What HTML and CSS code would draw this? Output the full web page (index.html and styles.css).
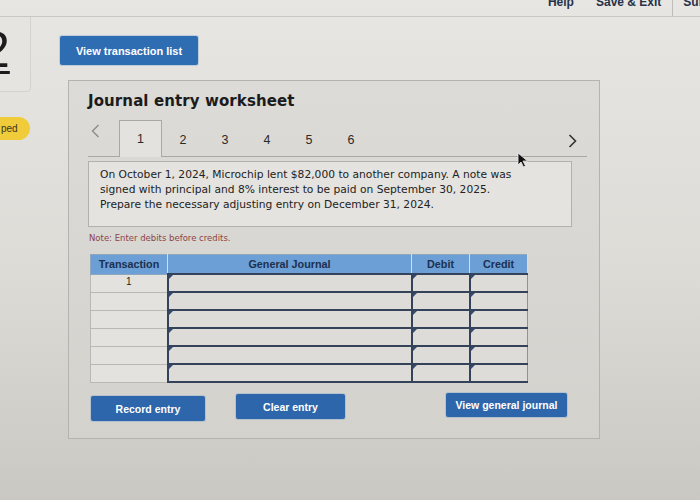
FILE: index.html
```html
<!DOCTYPE html>
<html>
<head>
<meta charset="utf-8">
<link rel="stylesheet" href="styles.css">
</head>
<body>
<header class="topbar">
  <span class="tb-item tb-help">Help</span>
  <span class="tb-item">Save &amp; Exit</span>
  <span class="tb-sep"></span>
  <span class="tb-item">Sub</span>
</header>
<div class="layout">
  <aside class="side">
    <div class="qcard"><span class="qnum">2</span></div>
    <div class="pill">ped</div>
  </aside>
  <main class="main">
    <button class="btn btn-list">View transaction list</button>
    <section class="panel">
      <h1 class="title">Journal entry worksheet</h1>
      <div class="tabs">
        <span class="nav nav-prev"><svg width="9" height="14" viewBox="0 0 9 14"><path d="M7.5 1 L1.5 7 L7.5 13" fill="none" stroke="#8a8a8a" stroke-width="1.3"/></svg></span>
        <span class="tab tab-active">1</span>
        <span class="tab">2</span>
        <span class="tab">3</span>
        <span class="tab">4</span>
        <span class="tab">5</span>
        <span class="tab">6</span>
        <span class="nav nav-next"><svg width="9" height="14" viewBox="0 0 9 14"><path d="M1.5 1 L7.5 7 L1.5 13" fill="none" stroke="#333" stroke-width="1.6"/></svg></span>
      </div>
      <div class="question">
        On October 1, 2024, Microchip lent $82,000 to another company. A note was signed with principal and 8% interest to be paid on September 30, 2025. Prepare the necessary adjusting entry on December 31, 2024.
      </div>
      <p class="note">Note: Enter debits before credits.</p>
      <table class="journal">
        <thead>
          <tr>
            <th class="c-tx">Transaction</th>
            <th class="c-gj">General Journal</th>
            <th class="c-dr">Debit</th>
            <th class="c-cr">Credit</th>
          </tr>
        </thead>
        <tbody>
          <tr><td class="tx">1</td><td class="in"></td><td class="in"></td><td class="in"></td></tr>
          <tr><td class="tx"></td><td class="in"></td><td class="in"></td><td class="in"></td></tr>
          <tr><td class="tx"></td><td class="in"></td><td class="in"></td><td class="in"></td></tr>
          <tr><td class="tx"></td><td class="in"></td><td class="in"></td><td class="in"></td></tr>
          <tr><td class="tx"></td><td class="in"></td><td class="in"></td><td class="in"></td></tr>
          <tr><td class="tx"></td><td class="in"></td><td class="in"></td><td class="in"></td></tr>
        </tbody>
      </table>
      <div class="actions">
        <button class="btn btn-record">Record entry</button>
        <button class="btn btn-clear">Clear entry</button>
        <button class="btn btn-view">View general journal</button>
      </div>
    </section>
  </main>
</div>
<svg class="cursor" width="12" height="16" viewBox="0 0 12 16"><path d="M1 1 L1 13 L4 10 L6.5 15 L8.5 14 L6 9 L10.5 9 Z" fill="#111" stroke="#eee" stroke-width="0.8"/></svg>
</body>
</html>
```
FILE: styles.css
```css
html, body {
  margin: 0;
  padding: 0;
}
body {
  width: 700px;
  height: 500px;
  overflow: hidden;
  position: relative;
  background: linear-gradient(to bottom, #e7e6e2 0%, #dddbd6 55%, #cac8c3 100%);
  font-family: "DejaVu Sans", Verdana, sans-serif;
  color: #222;
}
.topbar {
  height: 16px;
  border-bottom: 1px solid #c9c8c3;
  display: flex;
  justify-content: flex-end;
  align-items: flex-start;
  overflow: hidden;
}
.tb-item {
  font-family: "Liberation Sans", Arial, sans-serif;
  font-weight: bold;
  font-size: 12px;
  line-height: 12px;
  color: #27324a;
  margin-top: -4px;
  margin-left: 22px;
}
.tb-sep {
  width: 1px;
  height: 16px;
  background: #bfbdb8;
  margin-left: 11px;
  margin-right: -12px;
}
.tb-item:last-child {
  margin-right: -6px;
}
.layout {
  display: flex;
}
.side {
  width: 60px;
  flex: none;
  overflow: hidden;
}
.qcard {
  margin-top: -6px;
  margin-left: -10px;
  width: 41px;
  height: 81px;
  border: 1px solid #d3d2cd;
  border-radius: 4px;
  background: #e5e4e0;
  box-sizing: border-box;
  overflow: hidden;
}
.qnum {
  display: block;
  font-family: "Liberation Sans", Arial, sans-serif;
  font-size: 50px;
  line-height: 44px;
  color: #1c1c1c;
  margin-top: 16px;
  margin-left: -9px;
  text-decoration: underline;
  text-decoration-thickness: 3px;
  text-underline-offset: 4px;
}
.pill {
  margin-top: 25px;
  margin-left: -12px;
  width: 42px;
  height: 23px;
  background: #f1cc3a;
  border-radius: 12px;
  font-family: "Liberation Sans", Arial, sans-serif;
  font-size: 10px;
  line-height: 23px;
  color: #3a3420;
  padding-left: 13px;
  box-sizing: border-box;
}
.main {
  flex: 1;
}
.btn {
  border: none;
  background: #2d66aa;
  color: #fff;
  font-family: "Liberation Sans", Arial, sans-serif;
  font-weight: bold;
  font-size: 10.5px;
  border-radius: 2px;
  padding: 0;
  box-shadow: 0 0 0 1px rgba(120,160,210,0.35);
}
.btn-list {
  margin-top: 19px;
  width: 138px;
  height: 29px;
  font-size: 11px;
  background: #2f6db3;
}
.panel {
  margin-top: 15px;
  margin-left: 8px;
  width: 532px;
  box-sizing: border-box;
  border: 1px solid #b4b3ae;
  background: linear-gradient(to bottom, #dcdbd7, #d4d2cd);
  padding: 10px 12px 17px 19px;
}
.title {
  margin: 0;
  font-size: 15px;
  line-height: 20px;
  font-weight: bold;
  color: #1b1b1b;
  letter-spacing: 0.1px;
}
.tabs {
  margin-top: 9px;
  height: 36px;
  display: flex;
  align-items: stretch;
  border-bottom: 1px solid #a9a8a4;
}
.nav {
  display: flex;
  align-items: center;
}
.nav-prev {
  width: 31px;
  padding-left: 3px;
  box-sizing: border-box;
  align-items: flex-start;
  padding-top: 4px;
}
.nav-next {
  margin-left: auto;
  margin-right: 10px;
  padding-top: 6px;
}
.tab {
  width: 42px;
  display: flex;
  justify-content: center;
  align-items: center;
  padding-top: 4px;
  box-sizing: border-box;
  font-family: "Liberation Sans", Arial, sans-serif;
  font-size: 12.5px;
  color: #2a2a2a;
}
.tab-active {
  width: 43px;
  background: #e3e2de;
  border: 1px solid #a9a8a4;
  border-bottom: none;
  margin-bottom: -1px;
  padding-top: 0;
}
.question {
  margin-top: 4px;
  width: 484px;
  height: 66px;
  box-sizing: border-box;
  border: 1px solid #b2b1ad;
  background: #e4e3df;
  padding: 5px 50px 0 11px;
  font-size: 10.7px;
  line-height: 15px;
  color: #222;
}
.note {
  margin: 5px 0 0 1px;
  font-size: 8.5px;
  line-height: 12px;
  color: #8e4446;
}
.journal {
  margin-top: 10px;
  margin-left: 2px;
  border-collapse: collapse;
  table-layout: fixed;
  width: 435px;
}
.journal th {
  height: 18px;
  padding: 0;
  background: #6b9fd5;
  color: #1d3050;
  font-family: "Liberation Sans", Arial, sans-serif;
  font-weight: bold;
  font-size: 10.8px;
  border: 1px solid #8fa6bf;
  border-right-color: #d4dde8;
}
.c-tx { width: 76px; }
.c-gj { width: 243px; }
.c-dr { width: 57px; }
.c-cr { width: 57px; }
.journal td {
  height: 16px;
  padding: 0;
}
.journal td.tx {
  background: #e3e2de;
  border: 1px solid #b9b8b4;
  text-align: center;
  font-family: "Liberation Sans", Arial, sans-serif;
  font-size: 10px;
  color: #222;
  vertical-align: top;
  line-height: 14px;
}
.journal td.in {
  position: relative;
  background: #dedcd8;
  border: 1px solid #8d939c;
  border-top: 2px solid #34425a;
  border-left: 2px solid #34425a;
}
.journal td.in::before {
  content: "";
  position: absolute;
  left: 0;
  top: 0;
  border-top: 4px solid #2f4b78;
  border-right: 4px solid transparent;
}
.journal tbody tr:last-child td.in {
  border-bottom: 2px solid #34425a;
}
.actions {
  margin-top: 13px;
  display: flex;
  align-items: flex-start;
  padding-left: 3px;
}
.btn-record {
  width: 114px;
  height: 25px;
}
.btn-clear {
  width: 109px;
  height: 25px;
  margin-left: 31px;
  margin-top: -2px;
}
.btn-view {
  width: 121px;
  height: 24px;
  margin-left: 101px;
  margin-top: -3px;
}
.cursor {
  position: absolute;
  left: 517px;
  top: 152px;
}
```
